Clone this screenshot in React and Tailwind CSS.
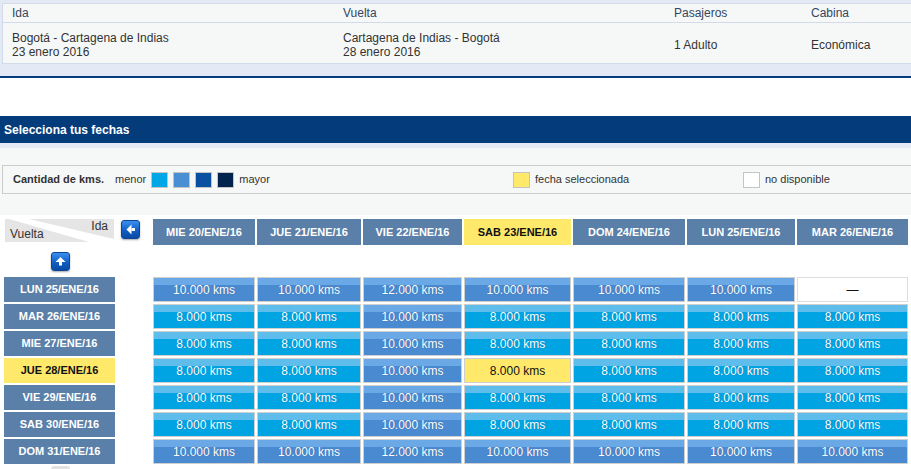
import React from "react";

const cols = [
  { label: "MIE 20/ENE/16", w: "w-[102px]" },
  { label: "JUE 21/ENE/16", w: "w-[104px]" },
  { label: "VIE 22/ENE/16", w: "w-[99px]" },
  { label: "SAB 23/ENE/16", w: "w-[107px]" },
  { label: "DOM 24/ENE/16", w: "w-[112px]" },
  { label: "LUN 25/ENE/16", w: "w-[108px]" },
  { label: "MAR 26/ENE/16", w: "w-[111px]" },
];

const rows = [
  { label: "LUN 25/ENE/16", kms: [10, 10, 12, 10, 10, 10, null] },
  { label: "MAR 26/ENE/16", kms: [8, 8, 10, 8, 8, 8, 8] },
  { label: "MIE 27/ENE/16", kms: [8, 8, 10, 8, 8, 8, 8] },
  { label: "JUE 28/ENE/16", kms: [8, 8, 10, 8, 8, 8, 8] },
  { label: "VIE 29/ENE/16", kms: [8, 8, 10, 8, 8, 8, 8] },
  { label: "SAB 30/ENE/16", kms: [8, 8, 10, 8, 8, 8, 8] },
  { label: "DOM 31/ENE/16", kms: [10, 10, 12, 10, 10, 10, 10] },
];

const SEL_COL = 3;
const SEL_ROW = 3;

function ArrowButton({ dir, className = "" }) {
  return (
    <div
      className={`w-[19px] h-[19px] rounded-[3px] border border-[#0b4596] bg-[linear-gradient(to_bottom,#3a8ff0,#0f5bc0_60%,#0a4aa6)] shadow-[0_1px_2px_rgba(0,0,0,0.35)] ${className}`}
    >
      <svg width="17" height="17" viewBox="0 0 17 17">
        {dir === "left" ? (
          <>
            <polygon points="4.5,8.5 9.5,3.5 9.5,13.5" fill="#fff" />
            <rect x="9.5" y="7" width="3.5" height="3" fill="#fff" />
          </>
        ) : (
          <>
            <polygon points="8.5,4 3.5,9 13.5,9" fill="#fff" />
            <rect x="7" y="9" width="3" height="3.5" fill="#fff" />
          </>
        )}
      </svg>
    </div>
  );
}

function Cell({ value, selected, w }) {
  if (value === null) {
    return (
      <div className={`${w} h-[25px] border border-[#dedede] bg-white flex items-center justify-center text-[#111]`}>
        —
      </div>
    );
  }
  if (selected) {
    return (
      <div className={`${w} h-[25px] border border-[#cfcfcf] bg-[#ffe96b] flex items-center justify-center text-[#111]`}>
        {value}.000 kms
      </div>
    );
  }
  const bg =
    value === 8
      ? "bg-[linear-gradient(to_bottom,#5fbdec_0,#5fbdec_7px,#00a4e3_7px)]"
      : "bg-[linear-gradient(to_bottom,#6aa9e6_0,#6aa9e6_7px,#4a8ad0_7px)]";
  return (
    <div
      className={`${w} h-[25px] border border-[#cfcfcf] ${bg} flex items-center justify-center text-white [text-shadow:0_0_1px_rgba(0,30,80,0.35)]`}
    >
      {value}.000 kms
    </div>
  );
}

export default function App() {
  return (
    <div className="w-[911px] h-[469px] overflow-hidden bg-white font-['Liberation_Sans',Arial,sans-serif] text-[12px] text-[#333]">
      {/* trip summary */}
      <div className="bg-[#e4eaf5] pt-[3px] pl-[2px] pb-[12px]">
        <div className="bg-[#f6f8f8] border-t border-l border-b border-[#d3daea]">
          <div className="grid grid-cols-[331px_331px_137px_1fr] h-[19px] items-center border-b border-[#d3daea] text-[#34465e]">
            <div className="pl-[9px]">Ida</div>
            <div className="pl-[9px]">Vuelta</div>
            <div className="pl-[9px]">Pasajeros</div>
            <div className="pl-[9px]">Cabina</div>
          </div>
          <div className="grid grid-cols-[331px_331px_137px_1fr] h-[40px] items-center leading-[14px]">
            <div className="pl-[9px] pt-[3px]">
              <div>Bogotá - Cartagena de Indias</div>
              <div>23 enero 2016</div>
            </div>
            <div className="pl-[9px] pt-[3px]">
              <div>Cartagena de Indias - Bogotá</div>
              <div>28 enero 2016</div>
            </div>
            <div className="pl-[9px] pt-[3px]">1 Adulto</div>
            <div className="pl-[9px] pt-[3px]">Económica</div>
          </div>
        </div>
      </div>
      <div className="h-[2px] bg-[#053c7c]" />
      <div className="h-[38px]" />

      {/* heading */}
      <div className="h-[27px] bg-[#043c7b] flex items-center pl-[4px] font-bold text-white">
        Selecciona tus fechas
      </div>
      <div className="h-[5px] bg-[#e4eaf5]" />

      {/* legend */}
      <div className="bg-[#f6f8f8] pt-[17px] pb-[21px]">
        <div className="ml-[2px] h-[29px] border-t border-l border-b border-[#cccccc] flex items-center text-[11px]">
          <div className="w-[510px] flex items-center">
            <span className="ml-[10px] font-bold">Cantidad de kms.</span>
            <span className="ml-[11px]">menor</span>
            <span className="ml-[5px] w-[17px] h-[16px] border border-[#c4c4c4] bg-[#00a6e6]" />
            <span className="ml-[5px] w-[17px] h-[16px] border border-[#c4c4c4] bg-[#4a8fd4]" />
            <span className="ml-[5px] w-[17px] h-[16px] border border-[#c4c4c4] bg-[#0a4fa0]" />
            <span className="ml-[5px] w-[17px] h-[16px] border border-[#c4c4c4] bg-[#03234f]" />
            <span className="ml-[5px]">mayor</span>
          </div>
          <div className="w-[230px] flex items-center">
            <span className="w-[17px] h-[16px] border border-[#c4c4c4] bg-[#ffe96a]" />
            <span className="ml-[5px]">fecha seleccionada</span>
          </div>
          <div className="flex items-center">
            <span className="w-[17px] h-[16px] border border-[#c4c4c4] bg-white" />
            <span className="ml-[5px]">no disponible</span>
          </div>
        </div>
      </div>

      {/* calendar grid */}
      <div className="ml-[2px] bg-white pt-[4px] h-[300px]">
        <div className="flex h-[26px]">
          <div className="w-[151px] flex items-start">
            <div className="relative ml-[3px] w-[109px] h-[23px] bg-[#e5e5e5] overflow-hidden">
              <svg className="absolute inset-0" width="109" height="23" viewBox="0 0 109 23">
                <polygon points="4,0 24,0 109,20 109,23 84,23" fill="#fff" />
              </svg>
              <span className="absolute right-[6px] top-[1px] leading-[13px]">Ida</span>
              <span className="absolute left-[5px] bottom-[1px] leading-[13px]">Vuelta</span>
            </div>
            <ArrowButton dir="left" className="ml-[7px] mt-[1px]" />
          </div>
          <div className="flex gap-[2px]">
            {cols.map((c, i) => (
              <div
                key={c.label}
                className={`${c.w} h-[26px] flex items-center justify-center text-[11px] font-bold ${
                  i === SEL_COL ? "bg-[#ffe96a] text-[#111]" : "bg-[#5a7fa8] text-white"
                }`}
              >
                {c.label}
              </div>
            ))}
          </div>
        </div>

        <div className="h-[32px] pt-[7px]">
          <ArrowButton dir="up" className="ml-[49px]" />
        </div>

        <div className="flex flex-col gap-[2px]">
          {rows.map((r, ri) => (
            <div key={r.label} className="flex h-[25px]">
              <div
                className={`ml-[2px] w-[111px] flex items-center justify-center text-[11px] font-bold ${
                  ri === SEL_ROW ? "bg-[#ffe96a] text-[#111]" : "bg-[#5a7fa8] text-white"
                }`}
              >
                {r.label}
              </div>
              <div className="ml-[38px] flex gap-[2px]">
                {r.kms.map((k, ci) => (
                  <Cell key={ci} value={k} w={cols[ci].w} selected={ri === SEL_ROW && ci === SEL_COL} />
                ))}
              </div>
            </div>
          ))}
        </div>
        <div className="mt-[2px] ml-[49px] w-[19px] h-[19px] rounded-[3px] bg-[#e2e2e2]" />
      </div>
    </div>
  );
}
